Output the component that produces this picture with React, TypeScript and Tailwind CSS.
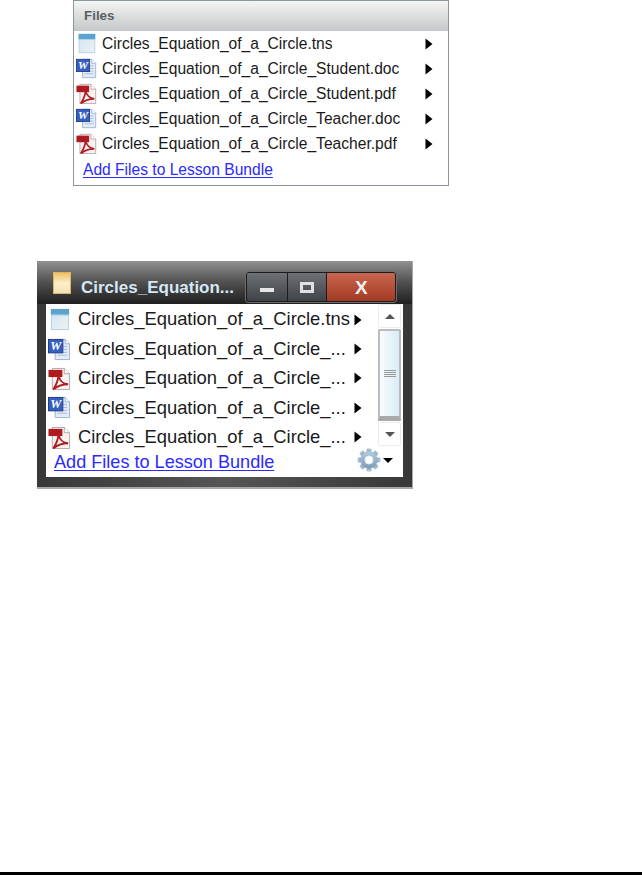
import React from 'react';

const sans = "font-['Liberation_Sans',Arial,sans-serif]";

function TnsIcon({ size }: { size: number }) {
  return (
    <svg width={size} height={size} viewBox="0 0 24 24" className="shrink-0">
      <defs>
        <linearGradient id="tnsBody" x1="0" y1="0" x2="1" y2="1">
          <stop offset="0" stopColor="#cfe6f4" />
          <stop offset="1" stopColor="#eef1f1" />
        </linearGradient>
      </defs>
      <rect x="3.5" y="1.5" width="18" height="21" fill="url(#tnsBody)" stroke="#b4cfe0" />
      <rect x="3" y="1" width="19" height="6" fill="#5ba3cf" />
      <rect x="3" y="7" width="19" height="1" fill="#a9d2ea" />
    </svg>
  );
}

function DocIcon({ size }: { size: number }) {
  return (
    <svg width={size} height={size} viewBox="0 0 24 24" className="shrink-0">
      <path d="M7.5 1.5H18L22.5 6V22.5H7.5Z" fill="#e2ebf6" stroke="#9db0cc" />
      <path d="M18 1.5V6H22.5" fill="#fff" stroke="#9db0cc" />
      <path d="M16 9H20M16 12H20M16 15H20M10 18H20" stroke="#a7bad6" />
      <rect x="0.5" y="1.5" width="15" height="14" fill="#3560c0" stroke="#1e3b8c" />
      <text x="8" y="13" textAnchor="middle" fontSize="13" fontWeight="700" fill="#fff" fontFamily="Liberation Serif, serif" fontStyle="italic">W</text>
    </svg>
  );
}

function PdfIcon({ size }: { size: number }) {
  return (
    <svg width={size} height={size} viewBox="0 0 24 24" className="shrink-0">
      <path d="M4.5 1.5H17L22.5 7V23.5H4.5Z" fill="#f7f2f2" stroke="#b8a5a5" />
      <path d="M17 1.5V7H22.5" fill="#fff" stroke="#b8a5a5" />
      <path d="M0.5 3H15V10.5H0.5Z" fill="#ad1a20" />
      <path d="M11 9C12.5 15 15 17.5 21 18C15 18 10 19.5 5.5 23.5C9 18 10.5 14 11 9Z" fill="none" stroke="#b01c22" strokeWidth="2" />
    </svg>
  );
}

function RowArrow() {
  return (
    <svg width="8" height="12" viewBox="0 0 8 12" className="shrink-0">
      <path d="M0.5 0.5L7.5 6L0.5 11.5Z" fill="#000" />
    </svg>
  );
}

function GearIcon() {
  const teeth = [0, 45, 90, 135, 180, 225, 270, 315];
  return (
    <svg width="24" height="24" viewBox="0 0 24 24" className="shrink-0">
      <defs>
        <linearGradient id="gearFill" x1="0" y1="0" x2="0" y2="1">
          <stop offset="0" stopColor="#b4cde0" />
          <stop offset="1" stopColor="#7d99b2" />
        </linearGradient>
      </defs>
      {teeth.map((deg) => (
        <rect key={deg} x="9.5" y="0.5" width="5" height="5" rx="1" fill="url(#gearFill)" transform={`rotate(${deg} 12 12)`} />
      ))}
      <circle cx="12" cy="12" r="8.5" fill="url(#gearFill)" />
      <circle cx="12" cy="12" r="4" fill="#fff" stroke="#e4edf4" />
    </svg>
  );
}

const fileKinds = [TnsIcon, DocIcon, PdfIcon, DocIcon, PdfIcon];

const panelFiles = [
  'Circles_Equation_of_a_Circle.tns',
  'Circles_Equation_of_a_Circle_Student.doc',
  'Circles_Equation_of_a_Circle_Student.pdf',
  'Circles_Equation_of_a_Circle_Teacher.doc',
  'Circles_Equation_of_a_Circle_Teacher.pdf',
];

const windowFiles = [
  'Circles_Equation_of_a_Circle.tns',
  'Circles_Equation_of_a_Circle_...',
  'Circles_Equation_of_a_Circle_...',
  'Circles_Equation_of_a_Circle_...',
  'Circles_Equation_of_a_Circle_...',
];

function FilesPanel() {
  return (
    <div className="ml-[73px] w-[376px] h-[186px] border border-[#8d959c] bg-white flex flex-col">
      <div className="h-[30px] shrink-0 px-[10px] pt-[2px] flex items-center bg-gradient-to-b from-[#f4f5f5] to-[#c6c9c9] border-b border-[#c4c8c8]">
        <span className="text-[13.4px] font-bold text-[#5a5f63]">Files</span>
      </div>
      <div className="flex flex-col pl-[2px]">
        {panelFiles.map((name, i) => {
          const Icon = fileKinds[i];
          return (
            <div key={name} className="h-[25px] flex items-center">
              <Icon size={21} />
              <span className="ml-[5px] w-[323px] text-[15.6px] text-[#1a1a1a] leading-none whitespace-nowrap">{name}</span>
              <RowArrow />
            </div>
          );
        })}
      </div>
      <a className="ml-[9px] mt-[5px] text-[15.6px] leading-[18px] text-[#2a2aff] underline underline-offset-2 w-fit">Add Files to Lesson Bundle</a>
    </div>
  );
}

function TitleButton({ children, className }: { children: React.ReactNode; className: string }) {
  return <div className={`h-[28px] flex items-center justify-center border-r border-[#1c1c1c] last:border-r-0 ${className}`}>{children}</div>;
}

function LessonWindow() {
  return (
    <div className="ml-[37px] mt-[75px] w-[376px] h-[228px] flex flex-col bg-[#383838] border-b-2 border-r border-[#a8a8a8]">
      <div className="h-[43px] shrink-0 flex items-start bg-gradient-to-b from-[#929292] via-[#505050] to-[#202020]">
        <div className="ml-[15px] mt-[10px] w-[20px] h-[24px] flex items-center justify-center">
          <div className="w-[18px] h-[22px] bg-gradient-to-b from-[#f0c060] via-[#fbeec8] to-[#f3e2b8] border border-[#d8b568]" />
        </div>
        <span className="ml-[9px] mt-[17px] w-[165px] text-[17px] leading-[19px] font-bold text-[#d6e8f6] whitespace-nowrap">Circles_Equation...</span>
        <div className="mt-[11px] w-[150px] flex border border-[#1c1c1c] rounded-[3px] overflow-hidden shadow-[0_0_0_1px_#6d6d6d]">
          <TitleButton className="w-[41px] bg-gradient-to-b from-[#6e7276] to-[#3f4347]">
            <div className="w-[14px] h-[4px] mt-[5px] bg-[#e6e6e6]" />
          </TitleButton>
          <TitleButton className="w-[40px] bg-gradient-to-b from-[#6e7276] to-[#3f4347]">
            <div className="w-[14px] h-[11px] border-[3px] border-[#e0e0e0]" />
          </TitleButton>
          <TitleButton className="w-[68px] bg-gradient-to-b from-[#c9654e] to-[#a23a24]">
            <span className="text-[19px] font-bold text-[#eee] leading-none">X</span>
          </TitleButton>
        </div>
      </div>
      <div className="ml-[9px] w-[357px] h-[173px] shrink-0 bg-white flex">
        <div className="w-[322px] shrink-0 flex flex-col">
          <div className="flex flex-col pt-[1px]">
            {windowFiles.map((name, i) => {
              const Icon = fileKinds[i];
              return (
                <div key={i} className="h-[29.4px] flex items-center pl-[2px]">
                  <Icon size={23} />
                  <span className="ml-[7px] w-[276px] text-[18.4px] text-[#1a1a1a] leading-none whitespace-nowrap">{name}</span>
                  <RowArrow />
                </div>
              );
            })}
          </div>
          <a className="ml-[8px] text-[18.1px] leading-[20px] text-[#2a2aff] underline underline-offset-2 w-fit whitespace-nowrap">Add Files to Lesson Bundle</a>
        </div>
        <div className="flex-1 flex flex-col items-start">
          <div className="ml-[10px] w-[23px] h-[143px] flex flex-col">
            <div className="h-[24px] flex items-center justify-center border border-[#ececec] rounded-[2px]">
              <div className="w-0 h-0 border-x-[5px] border-x-transparent border-b-[5px] border-b-[#555]" />
            </div>
            <div className="h-[92px] mt-[1px] border-x-2 border-t-2 border-[#bcbcbc] rounded-t-[2px] bg-gradient-to-r from-[#f8fbfd] to-[#d9ecf8] flex flex-col items-center justify-center gap-[1px] border-b-[5px] border-b-[#a9a9a9]">
              <div className="w-[12px] h-[1px] bg-[#999]" />
              <div className="w-[12px] h-[1px] bg-[#999]" />
              <div className="w-[12px] h-[1px] bg-[#999]" />
              <div className="w-[12px] h-[1px] bg-[#999]" />
            </div>
            <div className="h-[24px] mt-[1px] flex items-center justify-center border border-[#ececec] rounded-[2px]">
              <div className="w-0 h-0 border-x-[5px] border-x-transparent border-t-[5px] border-t-[#555]" />
            </div>
          </div>
          <div className="mt-[1px] -ml-[11px] flex items-center gap-[2px]">
            <GearIcon />
            <div className="w-0 h-0 border-x-[5px] border-x-transparent border-t-[5px] border-t-black" />
          </div>
        </div>
      </div>
      <div className="flex-1 bg-gradient-to-r from-[#383838] via-[#565656] to-[#383838]" />
    </div>
  );
}

export default function App() {
  return (
    <div className={`h-[875px] w-[642px] bg-white flex flex-col overflow-hidden ${sans}`}>
      <FilesPanel />
      <LessonWindow />
      <div className="mt-auto h-[3px] bg-black shrink-0" />
    </div>
  );
}
